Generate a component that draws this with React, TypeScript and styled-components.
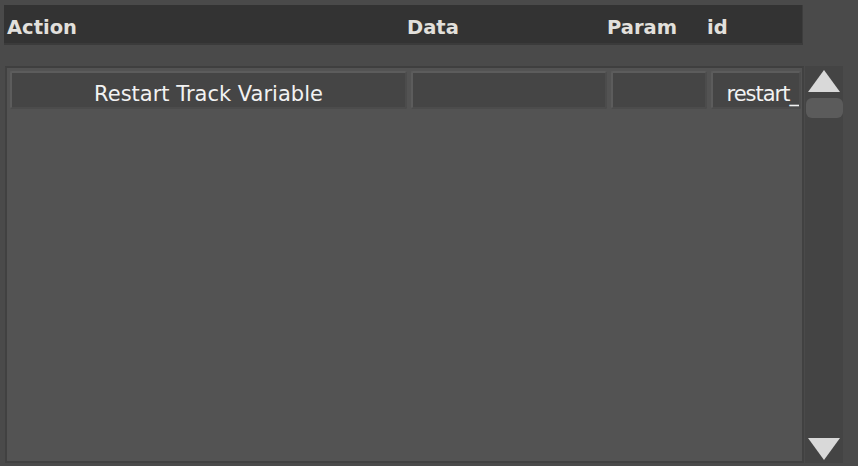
import React from "react";
import styled, { createGlobalStyle } from "styled-components";

const Global = createGlobalStyle`
  html, body { margin: 0; padding: 0; background: #4a4a4a; }
  body { width: 858px; height: 466px; overflow: hidden; font-family: "DejaVu Sans", "Liberation Sans", sans-serif; }
`;

const Page = styled.div`
  width: 858px;
  height: 466px;
  box-sizing: border-box;
  padding: 5px 0 3px 4px;
  display: flex;
  flex-direction: column;
  background: #4a4a4a;
`;

const HeaderBar = styled.div`
  width: 799px;
  height: 40px;
  box-sizing: border-box;
  background: #333333;
  border-right: 1px solid #3d3d3d;
  border-bottom: 2px solid #3b3b3b;
  display: grid;
  grid-template-columns: 400px 200px 100px 1fr;
  align-items: center;
  padding-left: 3px;
`;

const HeaderCell = styled.div`
  color: #e2e0dc;
  font-size: 19.5px;
  font-weight: bold;
  line-height: 1;
  padding-top: 8px;
`;

const Body = styled.div`
  margin-top: 21px;
  margin-left: 1px;
  flex: 1;
  display: flex;
  min-height: 0;
`;

const Frame = styled.div`
  width: 799px;
  box-sizing: border-box;
  background: #535353;
  border: 2px solid #414141;
  border-top-color: #3f3f3f;
  padding: 3px 0 0 3px;
  overflow: hidden;
`;

const Row = styled.div`
  display: grid;
  grid-template-columns: 397px 196px 96px 90px;
  column-gap: 4px;
  height: 38px;
`;

const Cell = styled.div<{ $align?: "center" | "right" }>`
  box-sizing: border-box;
  background: #454545;
  border: 2px solid #5c5c5c;
  border-right-color: #4c4c4c;
  border-bottom-color: #4c4c4c;
  border-radius: 2px;
  color: #f2f2f2;
  font-size: 21px;
  padding-top: 7px;
  display: flex;
  align-items: center;
  justify-content: ${(p) => (p.$align === "right" ? "flex-end" : "center")};
  letter-spacing: ${(p) => (p.$align === "right" ? "-1px" : "0")};
  white-space: nowrap;
  overflow: hidden;
`;

const Scrollbar = styled.div`
  width: 38px;
  margin-left: 1px;
  background: #444444;
  display: flex;
  flex-direction: column;
  align-items: center;
  padding: 3px 0 2px;
  box-sizing: border-box;
`;

const Arrow = styled.svg`
  display: block;
  flex: none;
`;

const Thumb = styled.div`
  width: 37px;
  height: 20px;
  margin-top: 5px;
  border-radius: 6px;
  background: #5b5b5b;
`;

const Spacer = styled.div`
  flex: 1;
`;

export default function App() {
  return (
    <>
      <Global />
      <Page>
        <HeaderBar>
          <HeaderCell>Action</HeaderCell>
          <HeaderCell>Data</HeaderCell>
          <HeaderCell>Param</HeaderCell>
          <HeaderCell>id</HeaderCell>
        </HeaderBar>
        <Body>
          <Frame>
            <Row>
              <Cell>Restart Track Variable</Cell>
              <Cell />
              <Cell />
              <Cell $align="right">restart_</Cell>
            </Row>
          </Frame>
          <Scrollbar>
            <Arrow width="34" height="24" viewBox="0 0 34 24">
              <polygon points="17,1 33,23 1,23" fill="#d9d9d9" />
            </Arrow>
            <Thumb />
            <Spacer />
            <Arrow width="34" height="24" viewBox="0 0 34 24">
              <polygon points="1,1 33,1 17,23" fill="#d9d9d9" />
            </Arrow>
          </Scrollbar>
        </Body>
      </Page>
    </>
  );
}
